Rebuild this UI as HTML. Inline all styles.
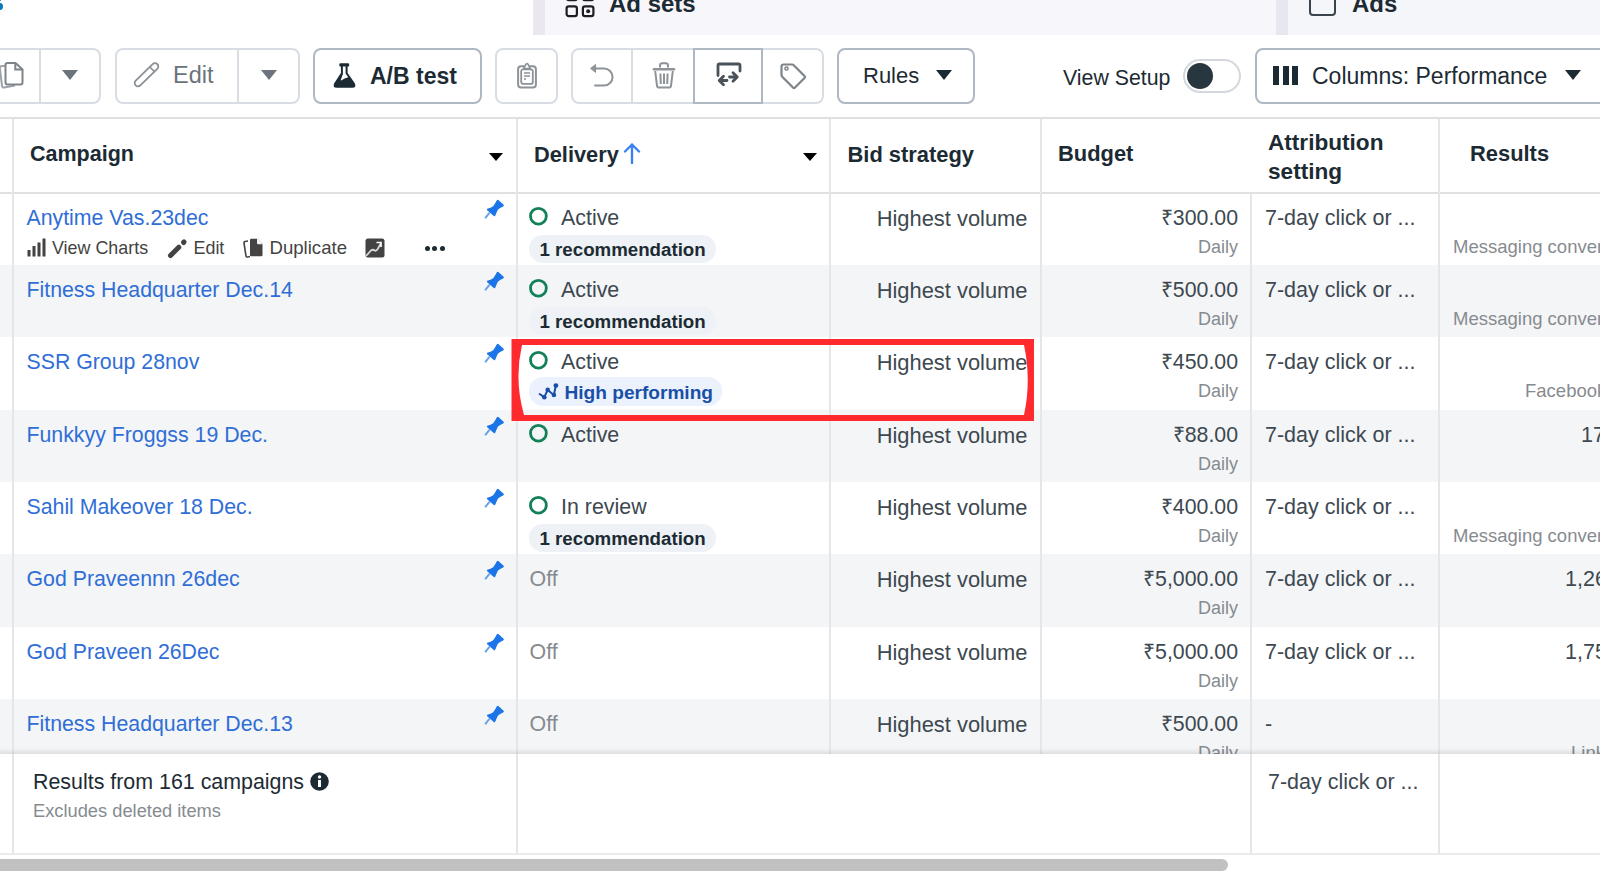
<!DOCTYPE html>
<html><head><meta charset="utf-8"><title>Ads Manager</title>
<style>
*{margin:0;padding:0;box-sizing:border-box}
html,body{width:1600px;height:872px;overflow:hidden;background:#fff;font-family:"Liberation Sans",sans-serif;position:relative}
.t{position:absolute;line-height:1;white-space:nowrap}
.a{position:absolute}
.btn{position:absolute;top:48px;height:56px;border:2px solid #d8dde3;border-radius:8px;background:#fff}
.dk{border-color:#aeb8c2}
.vl{position:absolute;width:2px;background:#e4e6ea}
.hl{position:absolute;height:2px;background:#dddddd}
.tri{position:absolute;width:0;height:0;border-left:8px solid transparent;border-right:8px solid transparent;border-top:9px solid #6b747c}
.row{position:absolute;left:0;width:1600px}
.alt{background:#f4f5f7}
.link{color:#2f6ed6}
.body{color:#3d4850}
.grey{color:#868b90}
.hd{color:#1c2b33;font-weight:bold}
.pill{position:absolute;border-radius:14px;background:#eef1f5}
</style></head><body>
<div class="a" style="left:533px;top:0;width:743px;height:35px;background:#f7f6fa"></div>
<div class="a" style="left:533px;top:0;width:12px;height:35px;background:#ebe7ee"></div>
<div class="a" style="left:1276px;top:0;width:12px;height:35px;background:#e7e8ef"></div>
<div class="a" style="left:1288px;top:0;width:312px;height:35px;background:#f5f6fa"></div>
<div class="a" style="left:-3.2px;top:3px;width:5.8px;height:6.8px;border-radius:50%;background:#0a78be"></div>
<div class="a" style="left:-2px;top:-1px;width:3.4px;height:2px;border-radius:1px;background:#0a78be"></div>
<svg class="a" style="left:564px;top:-14px" width="34" height="34" viewBox="0 0 34 34">
<rect x="2.6" y="4" width="10.3" height="10.2" rx="2.2" fill="none" stroke="#1c1e21" stroke-width="2.2"/>
<rect x="18.9" y="4" width="10.5" height="10.2" rx="2.2" fill="none" stroke="#1c1e21" stroke-width="2.2"/>
<rect x="2.6" y="20.3" width="10.3" height="9.9" rx="2.2" fill="none" stroke="#1c1e21" stroke-width="2.2"/>
<rect x="18.9" y="20.3" width="10.5" height="9.9" rx="2.2" fill="none" stroke="#1c1e21" stroke-width="2.2"/>
<circle cx="24.15" cy="25.25" r="2" fill="#1c1e21"/>
</svg>
<div class="t " style="top:-8.32px;font-size:24px;left:609.00px;color:#1c2b33;font-weight:bold;">Ad sets</div>
<div class="a" style="left:1309px;top:-12px;width:27px;height:28px;border:2.5px solid #3a444c;border-radius:4px"></div>
<div class="t " style="top:-8.32px;font-size:24px;left:1352.00px;color:#1c2b33;font-weight:bold;">Ads</div>
<div class="btn" style="left:-20px;width:121px"></div>
<div class="vl" style="left:39px;top:48px;height:56px;background:#d8dde3"></div>
<svg class="a" style="left:-6px;top:62px" width="32" height="28" viewBox="0 0 32 28">
<path d="M11 3.8 L7 4.3 Q5.6 4.5 5.8 5.9 L8 23.8 Q8.3 25.8 10.2 25.5 L21 23.6" fill="none" stroke="#9ca2a7" stroke-width="2"/>
<path d="M11.5 3 Q11.5 1 13.5 1 L21.5 1 L28.5 7.5 L28.5 20.5 Q28.5 22.5 26.5 22.5 L13.5 22.5 Q11.5 22.5 11.5 20.5 Z" fill="#fff" stroke="#7d848a" stroke-width="2" stroke-linejoin="round"/>
<path d="M21.3 1 L21.3 7.6 L28.5 7.6" fill="none" stroke="#7d848a" stroke-width="2"/>
</svg>
<div class="tri" style="left:62px;top:70px;border-left-width:8px;border-right-width:8px;border-top:10px solid #6b747c"></div>
<div class="btn" style="left:115px;width:185px"></div>
<div class="vl" style="left:237px;top:48px;height:56px;background:#d8dde3"></div>
<svg class="a" style="left:133px;top:62px" width="28" height="27" viewBox="0 0 28 27">
<path d="M2.69 18.64 L19.69 2.14 A3.3 3.3 0 0 1 24.31 6.86 L7.31 23.36 A3.3 3.3 0 0 1 2.69 18.64 Z" fill="none" stroke="#8a9095" stroke-width="1.8" stroke-linejoin="round"/>
<path d="M16.83 4.94 L21.45 9.66" stroke="#8a9095" stroke-width="1.6"/>
</svg>
<div class="t " style="top:64.11px;font-size:23.5px;left:173.00px;color:#6b737a;">Edit</div>
<div class="tri" style="left:261px;top:70px;border-top:10px solid #6b747c"></div>
<div class="btn dk" style="left:313px;width:169px"></div>
<svg class="a" style="left:332px;top:62px" width="26" height="27" viewBox="0 0 26 27">
<path d="M7.3 2.5 Q7.3 1.3 8.5 1.3 L16 1.3 Q17.2 1.3 17.2 2.5 L17.2 3.6 Q17.2 4.6 16.2 4.6 L15.6 4.6 L15.6 11 L22.8 21.2 Q24.8 25.8 20.3 25.8 L4.7 25.8 Q0.2 25.8 2.2 21.2 L8.9 11 L8.9 4.6 L8.3 4.6 Q7.3 4.6 7.3 3.6 Z" fill="#1c2b33"/>
<path d="M10.9 4.6 L13.6 4.6 L13.6 11.6 L16.3 15.2 Q12.5 16 9.2 18.6 Q8.6 18.3 8.9 17.4 L10.9 12 Z" fill="#fff"/>
</svg>
<div class="t " style="top:64.53px;font-size:23px;left:370.00px;color:#1c2b33;font-weight:bold;">A/B test</div>
<div class="btn" style="left:495px;width:63px"></div>
<svg class="a" style="left:515px;top:61px" width="24" height="29" viewBox="0 0 24 29">
<rect x="3.1" y="5.3" width="17.8" height="21.2" rx="3" fill="none" stroke="#8d9398" stroke-width="2"/>
<rect x="6.2" y="8.3" width="11.6" height="14.6" rx="2" fill="none" stroke="#8d9398" stroke-width="1.8"/>
<path d="M8.6 7.6 L11 3.2 Q12 2 13 3.2 L15.4 7.6 Z" fill="#fff" stroke="#8d9398" stroke-width="1.7" stroke-linejoin="round"/>
<path d="M9 12 L15 12 M9 15 L15 15 M9 18 L11 18" stroke="#8d9398" stroke-width="1.4"/>
</svg>
<div class="btn" style="left:571px;width:253px"></div>
<div class="vl" style="left:631px;top:48px;height:56px;background:#d8dde3"></div>
<div class="a" style="left:693px;top:48px;width:70px;height:56px;border:2px solid #aeb8c2"></div>
<svg class="a" style="left:589px;top:62px" width="26" height="26" viewBox="0 0 26 26">
<path d="M6 6.4 L15 6.4 A8.6 8.6 0 0 1 15 23.6 L6 23.6" fill="none" stroke="#8d9398" stroke-width="2" stroke-linecap="round"/>
<path d="M1.6 6.4 L6.6 2.4 L6.6 10.4 Z" fill="#8d9398" stroke="#8d9398" stroke-width="1" stroke-linejoin="round"/>
</svg>
<svg class="a" style="left:651px;top:62px" width="26" height="27" viewBox="0 0 26 27">
<path d="M9 5.5 L9 3.5 Q9 1.3 11.2 1.3 L14.8 1.3 Q17 1.3 17 3.5 L17 5.5" fill="none" stroke="#8d9398" stroke-width="2"/>
<path d="M3 6 L23 6 Q24.3 6 24.3 7.3 Q24.3 8.6 23 8.6 L3 8.6 Q1.7 8.6 1.7 7.3 Q1.7 6 3 6 Z" fill="#8d9398"/>
<path d="M4.2 9 L6 23.8 Q6.3 25.6 8.2 25.6 L17.8 25.6 Q19.7 25.6 20 23.8 L21.8 9" fill="none" stroke="#8d9398" stroke-width="2" stroke-linejoin="round"/>
<path d="M9.4 11.5 L9.8 22 M13 11.5 L13 22 M16.6 11.5 L16.2 22" stroke="#8d9398" stroke-width="2"/>
</svg>
<svg class="a" style="left:714px;top:62px" width="30" height="26" viewBox="0 0 30 26">
<path d="M4 13.5 L4 3.5 Q4 2 5.5 2 L24.5 2 Q26 2 26 3.5 L26 9" fill="none" stroke="#4a5258" stroke-width="2.8" stroke-linecap="round" stroke-linejoin="round"/>
<path d="M13 18.5 L5.5 18.5 M9.5 14.2 L5.2 18.5 L9.5 22.8" fill="none" stroke="#4a5258" stroke-width="2.8" stroke-linecap="round" stroke-linejoin="round"/>
<path d="M15.5 15 L23 15 M19 10.7 L23.3 15 L19 19.3" fill="none" stroke="#4a5258" stroke-width="2.8" stroke-linecap="round" stroke-linejoin="round"/>
</svg>
<svg class="a" style="left:779px;top:62px" width="28" height="28" viewBox="0 0 28 28">
<path d="M2.5 4.5 Q2.5 2.5 4.5 2.5 L13 2.5 Q14 2.5 15 3.5 L25.5 14 Q26.5 15 25.5 16 L16 25.5 Q15 26.5 14 25.5 L3.5 15 Q2.5 14 2.5 13 Z" fill="none" stroke="#7d848a" stroke-width="2.2" stroke-linejoin="round"/>
<circle cx="7.5" cy="6.5" r="1.6" fill="none" stroke="#7d848a" stroke-width="1.5"/>
</svg>
<div class="btn dk" style="left:837px;width:138px"></div>
<div class="t " style="top:65.38px;font-size:22px;left:863.00px;color:#1c2b33;">Rules</div>
<div class="tri" style="left:936px;top:70px;border-top:10px solid #1c2b33"></div>
<div class="t " style="top:67.57px;font-size:21.3px;left:1063.00px;color:#1c2b33;">View Setup</div>
<div class="a" style="left:1183px;top:59px;width:58px;height:34px;border:2px solid #d5d9de;border-radius:17px;background:#fff"></div>
<div class="a" style="left:1187px;top:63px;width:26px;height:26px;border-radius:50%;background:#283640"></div>
<div class="btn dk" style="left:1255px;width:380px"></div>
<div class="a" style="left:1273px;top:66px;width:6px;height:19px;background:#1c2b33"></div>
<div class="a" style="left:1282.5px;top:66px;width:6px;height:19px;background:#1c2b33"></div>
<div class="a" style="left:1292px;top:66px;width:6px;height:19px;background:#1c2b33"></div>
<div class="t " style="top:64.53px;font-size:23px;left:1312.00px;color:#1c2b33;">Columns: Performance</div>
<div class="tri" style="left:1565px;top:70px;border-top:10px solid #1c2b33"></div>
<div class="row alt" style="top:265px;height:72px"></div>
<div class="row alt" style="top:410px;height:72px"></div>
<div class="row alt" style="top:554px;height:73px"></div>
<div class="row alt" style="top:699px;height:72px"></div>
<div class="hl" style="left:0;top:117px;width:1600px;background:#e0e0e0"></div>
<div class="hl" style="left:0;top:192px;width:1600px;background:#e1e1e1"></div>
<div class="vl" style="left:12px;top:119px;height:635px"></div>
<div class="vl" style="left:516px;top:119px;height:635px"></div>
<div class="vl" style="left:829px;top:119px;height:635px"></div>
<div class="vl" style="left:1040px;top:119px;height:635px"></div>
<div class="vl" style="left:1438px;top:119px;height:635px"></div>
<div class="vl" style="left:1250px;top:194px;height:560px"></div>
<div class="t hd" style="top:143.80px;font-size:21.5px;left:30.00px;">Campaign</div>
<div class="tri" style="left:489px;top:153px;border-left-width:7px;border-right-width:7px;border-top:8px solid #000"></div>
<div class="t hd" style="top:143.55px;font-size:21.8px;left:534.00px;">Delivery</div>
<svg class="a" style="left:623px;top:142px" width="18" height="22" viewBox="0 0 18 22">
<path d="M9 21 L9 2.5 M2 9.5 L9 2.5 L16 9.5" fill="none" stroke="#3b82f0" stroke-width="2.4" stroke-linecap="round" stroke-linejoin="round"/>
</svg>
<div class="tri" style="left:803px;top:153px;border-left-width:7px;border-right-width:7px;border-top:8px solid #000"></div>
<div class="t hd" style="top:143.96px;font-size:21.9px;left:847.50px;">Bid strategy</div>
<div class="t hd" style="top:143.46px;font-size:21.9px;left:1058.00px;">Budget</div>
<div class="t hd" style="top:132.17px;font-size:22.6px;left:1268.00px;">Attribution</div>
<div class="t hd" style="top:161.47px;font-size:22.6px;left:1268.00px;">setting</div>
<div class="t hd" style="top:143.46px;font-size:21.9px;left:1470.00px;">Results</div>
<div class="t link" style="top:208.17px;font-size:21.3px;left:26.50px;">Anytime Vas.23dec</div>
<svg class="a" style="left:475px;top:195px" width="40" height="30" viewBox="0 0 40 30">
<path d="M14.2 18.2 L10.6 22.6" stroke="#6aa0f0" stroke-width="2" stroke-linecap="round"/>
<path d="M21.9 5.2 Q22.6 4.4 23.4 5 L28.6 9.8 Q29.3 10.6 28.5 11.3 Q25.5 12.5 23 14.6 Q21.6 17.4 20.2 20.8 Q19.6 21.7 18.8 21.1 L12.2 15.2 Q11.5 14.4 12.3 13.8 Q15.6 12.8 18.2 11.2 Q20.2 8.6 21.9 5.2 Z" fill="#1b74e8"/>
</svg>
<svg class="a" style="left:528px;top:205px" width="22" height="22" viewBox="0 0 22 22"><circle cx="10.4" cy="11.2" r="7.9" fill="none" stroke="#138058" stroke-width="2.8"/></svg>
<div class="t body" style="top:208.08px;font-size:21.4px;left:561.00px;">Active</div>
<div class="pill" style="left:529px;top:235px;width:187px;height:28px"></div>
<div class="t " style="top:241.17px;font-size:18.7px;left:539.50px;color:#1c2b33;font-weight:bold;">1 recommendation</div>
<div class="t body" style="top:207.66px;font-size:21.9px;right:572.50px;text-align:right;">Highest volume</div>
<div class="t body" style="top:208.17px;font-size:21.3px;right:362.00px;text-align:right;">₹300.00</div>
<div class="t grey" style="top:237.96px;font-size:18px;right:362.00px;text-align:right;">Daily</div>
<div class="t body" style="top:208.00px;font-size:21.5px;left:1265.00px;">7-day click or ...</div>
<div class="t grey" style="top:237.54px;font-size:18.5px;left:1453.00px;">Messaging conversations started</div>
<div class="t link" style="top:280.17px;font-size:21.3px;left:26.50px;">Fitness Headquarter Dec.14</div>
<svg class="a" style="left:475px;top:267px" width="40" height="30" viewBox="0 0 40 30">
<path d="M14.2 18.2 L10.6 22.6" stroke="#6aa0f0" stroke-width="2" stroke-linecap="round"/>
<path d="M21.9 5.2 Q22.6 4.4 23.4 5 L28.6 9.8 Q29.3 10.6 28.5 11.3 Q25.5 12.5 23 14.6 Q21.6 17.4 20.2 20.8 Q19.6 21.7 18.8 21.1 L12.2 15.2 Q11.5 14.4 12.3 13.8 Q15.6 12.8 18.2 11.2 Q20.2 8.6 21.9 5.2 Z" fill="#1b74e8"/>
</svg>
<svg class="a" style="left:528px;top:277px" width="22" height="22" viewBox="0 0 22 22"><circle cx="10.4" cy="11.2" r="7.9" fill="none" stroke="#138058" stroke-width="2.8"/></svg>
<div class="t body" style="top:280.08px;font-size:21.4px;left:561.00px;">Active</div>
<div class="pill" style="left:529px;top:307px;width:187px;height:28px"></div>
<div class="t " style="top:313.17px;font-size:18.7px;left:539.50px;color:#1c2b33;font-weight:bold;">1 recommendation</div>
<div class="t body" style="top:279.66px;font-size:21.9px;right:572.50px;text-align:right;">Highest volume</div>
<div class="t body" style="top:280.17px;font-size:21.3px;right:362.00px;text-align:right;">₹500.00</div>
<div class="t grey" style="top:309.96px;font-size:18px;right:362.00px;text-align:right;">Daily</div>
<div class="t body" style="top:280.00px;font-size:21.5px;left:1265.00px;">7-day click or ...</div>
<div class="t grey" style="top:309.54px;font-size:18.5px;left:1453.00px;">Messaging conversations started</div>
<div class="t link" style="top:352.17px;font-size:21.3px;left:26.50px;">SSR Group 28nov</div>
<svg class="a" style="left:475px;top:339px" width="40" height="30" viewBox="0 0 40 30">
<path d="M14.2 18.2 L10.6 22.6" stroke="#6aa0f0" stroke-width="2" stroke-linecap="round"/>
<path d="M21.9 5.2 Q22.6 4.4 23.4 5 L28.6 9.8 Q29.3 10.6 28.5 11.3 Q25.5 12.5 23 14.6 Q21.6 17.4 20.2 20.8 Q19.6 21.7 18.8 21.1 L12.2 15.2 Q11.5 14.4 12.3 13.8 Q15.6 12.8 18.2 11.2 Q20.2 8.6 21.9 5.2 Z" fill="#1b74e8"/>
</svg>
<svg class="a" style="left:528px;top:349px" width="22" height="22" viewBox="0 0 22 22"><circle cx="10.4" cy="11.2" r="7.9" fill="none" stroke="#138058" stroke-width="2.8"/></svg>
<div class="t body" style="top:352.08px;font-size:21.4px;left:561.00px;">Active</div>
<div class="pill" style="left:529px;top:377px;width:193px;height:29px;background:#ebf2fd"></div>
<svg class="a" style="left:538px;top:383px" width="22" height="20" viewBox="0 0 22 20">
<path d="M1.6 11 L6.3 14.2 L9.7 6.9 L15.9 12 L17.9 2.1" fill="none" stroke="#1a4fa8" stroke-width="2" stroke-linejoin="round" stroke-linecap="round"/>
<circle cx="6.3" cy="14.2" r="2.3" fill="#1a4fa8"/><circle cx="9.7" cy="6.9" r="2.3" fill="#1a4fa8"/><circle cx="15.9" cy="12" r="2.3" fill="#1a4fa8"/><circle cx="17.9" cy="2.6" r="2.4" fill="#1a4fa8"/>
</svg>
<div class="t " style="top:383.23px;font-size:19.1px;left:564.50px;color:#1a4fa8;font-weight:bold;">High performing</div>
<div class="t body" style="top:351.66px;font-size:21.9px;right:572.50px;text-align:right;">Highest volume</div>
<div class="t body" style="top:352.17px;font-size:21.3px;right:362.00px;text-align:right;">₹450.00</div>
<div class="t grey" style="top:381.96px;font-size:18px;right:362.00px;text-align:right;">Daily</div>
<div class="t body" style="top:352.00px;font-size:21.5px;left:1265.00px;">7-day click or ...</div>
<div class="t grey" style="top:381.54px;font-size:18.5px;left:1525.00px;">Facebook likes</div>
<div class="t link" style="top:425.17px;font-size:21.3px;left:26.50px;">Funkkyy Froggss 19 Dec.</div>
<svg class="a" style="left:475px;top:412px" width="40" height="30" viewBox="0 0 40 30">
<path d="M14.2 18.2 L10.6 22.6" stroke="#6aa0f0" stroke-width="2" stroke-linecap="round"/>
<path d="M21.9 5.2 Q22.6 4.4 23.4 5 L28.6 9.8 Q29.3 10.6 28.5 11.3 Q25.5 12.5 23 14.6 Q21.6 17.4 20.2 20.8 Q19.6 21.7 18.8 21.1 L12.2 15.2 Q11.5 14.4 12.3 13.8 Q15.6 12.8 18.2 11.2 Q20.2 8.6 21.9 5.2 Z" fill="#1b74e8"/>
</svg>
<svg class="a" style="left:528px;top:422px" width="22" height="22" viewBox="0 0 22 22"><circle cx="10.4" cy="11.2" r="7.9" fill="none" stroke="#138058" stroke-width="2.8"/></svg>
<div class="t body" style="top:425.08px;font-size:21.4px;left:561.00px;">Active</div>
<div class="t body" style="top:424.66px;font-size:21.9px;right:572.50px;text-align:right;">Highest volume</div>
<div class="t body" style="top:425.17px;font-size:21.3px;right:362.00px;text-align:right;">₹88.00</div>
<div class="t grey" style="top:454.96px;font-size:18px;right:362.00px;text-align:right;">Daily</div>
<div class="t body" style="top:425.00px;font-size:21.5px;left:1265.00px;">7-day click or ...</div>
<div class="t body" style="top:425.00px;font-size:21.5px;left:1581.00px;">170</div>
<div class="t link" style="top:497.17px;font-size:21.3px;left:26.50px;">Sahil Makeover 18 Dec.</div>
<svg class="a" style="left:475px;top:484px" width="40" height="30" viewBox="0 0 40 30">
<path d="M14.2 18.2 L10.6 22.6" stroke="#6aa0f0" stroke-width="2" stroke-linecap="round"/>
<path d="M21.9 5.2 Q22.6 4.4 23.4 5 L28.6 9.8 Q29.3 10.6 28.5 11.3 Q25.5 12.5 23 14.6 Q21.6 17.4 20.2 20.8 Q19.6 21.7 18.8 21.1 L12.2 15.2 Q11.5 14.4 12.3 13.8 Q15.6 12.8 18.2 11.2 Q20.2 8.6 21.9 5.2 Z" fill="#1b74e8"/>
</svg>
<svg class="a" style="left:528px;top:494px" width="22" height="22" viewBox="0 0 22 22"><circle cx="10.4" cy="11.2" r="7.9" fill="none" stroke="#138058" stroke-width="2.8"/></svg>
<div class="t body" style="top:497.08px;font-size:21.4px;left:561.00px;">In review</div>
<div class="pill" style="left:529px;top:524px;width:187px;height:28px"></div>
<div class="t " style="top:530.17px;font-size:18.7px;left:539.50px;color:#1c2b33;font-weight:bold;">1 recommendation</div>
<div class="t body" style="top:496.66px;font-size:21.9px;right:572.50px;text-align:right;">Highest volume</div>
<div class="t body" style="top:497.17px;font-size:21.3px;right:362.00px;text-align:right;">₹400.00</div>
<div class="t grey" style="top:526.96px;font-size:18px;right:362.00px;text-align:right;">Daily</div>
<div class="t body" style="top:497.00px;font-size:21.5px;left:1265.00px;">7-day click or ...</div>
<div class="t grey" style="top:526.54px;font-size:18.5px;left:1453.00px;">Messaging conversations started</div>
<div class="t link" style="top:569.17px;font-size:21.3px;left:26.50px;">God Praveennn 26dec</div>
<svg class="a" style="left:475px;top:556px" width="40" height="30" viewBox="0 0 40 30">
<path d="M14.2 18.2 L10.6 22.6" stroke="#6aa0f0" stroke-width="2" stroke-linecap="round"/>
<path d="M21.9 5.2 Q22.6 4.4 23.4 5 L28.6 9.8 Q29.3 10.6 28.5 11.3 Q25.5 12.5 23 14.6 Q21.6 17.4 20.2 20.8 Q19.6 21.7 18.8 21.1 L12.2 15.2 Q11.5 14.4 12.3 13.8 Q15.6 12.8 18.2 11.2 Q20.2 8.6 21.9 5.2 Z" fill="#1b74e8"/>
</svg>
<div class="t grey" style="top:569.08px;font-size:21.4px;left:529.50px;">Off</div>
<div class="t body" style="top:568.66px;font-size:21.9px;right:572.50px;text-align:right;">Highest volume</div>
<div class="t body" style="top:569.17px;font-size:21.3px;right:362.00px;text-align:right;">₹5,000.00</div>
<div class="t grey" style="top:598.96px;font-size:18px;right:362.00px;text-align:right;">Daily</div>
<div class="t body" style="top:569.00px;font-size:21.5px;left:1265.00px;">7-day click or ...</div>
<div class="t body" style="top:569.00px;font-size:21.5px;left:1565.00px;">1,260</div>
<div class="t link" style="top:642.17px;font-size:21.3px;left:26.50px;">God Praveen 26Dec</div>
<svg class="a" style="left:475px;top:629px" width="40" height="30" viewBox="0 0 40 30">
<path d="M14.2 18.2 L10.6 22.6" stroke="#6aa0f0" stroke-width="2" stroke-linecap="round"/>
<path d="M21.9 5.2 Q22.6 4.4 23.4 5 L28.6 9.8 Q29.3 10.6 28.5 11.3 Q25.5 12.5 23 14.6 Q21.6 17.4 20.2 20.8 Q19.6 21.7 18.8 21.1 L12.2 15.2 Q11.5 14.4 12.3 13.8 Q15.6 12.8 18.2 11.2 Q20.2 8.6 21.9 5.2 Z" fill="#1b74e8"/>
</svg>
<div class="t grey" style="top:642.08px;font-size:21.4px;left:529.50px;">Off</div>
<div class="t body" style="top:641.66px;font-size:21.9px;right:572.50px;text-align:right;">Highest volume</div>
<div class="t body" style="top:642.17px;font-size:21.3px;right:362.00px;text-align:right;">₹5,000.00</div>
<div class="t grey" style="top:671.96px;font-size:18px;right:362.00px;text-align:right;">Daily</div>
<div class="t body" style="top:642.00px;font-size:21.5px;left:1265.00px;">7-day click or ...</div>
<div class="t body" style="top:642.00px;font-size:21.5px;left:1565.00px;">1,750</div>
<div class="t link" style="top:714.17px;font-size:21.3px;left:26.50px;">Fitness Headquarter Dec.13</div>
<svg class="a" style="left:475px;top:701px" width="40" height="30" viewBox="0 0 40 30">
<path d="M14.2 18.2 L10.6 22.6" stroke="#6aa0f0" stroke-width="2" stroke-linecap="round"/>
<path d="M21.9 5.2 Q22.6 4.4 23.4 5 L28.6 9.8 Q29.3 10.6 28.5 11.3 Q25.5 12.5 23 14.6 Q21.6 17.4 20.2 20.8 Q19.6 21.7 18.8 21.1 L12.2 15.2 Q11.5 14.4 12.3 13.8 Q15.6 12.8 18.2 11.2 Q20.2 8.6 21.9 5.2 Z" fill="#1b74e8"/>
</svg>
<div class="t grey" style="top:714.08px;font-size:21.4px;left:529.50px;">Off</div>
<div class="t body" style="top:713.66px;font-size:21.9px;right:572.50px;text-align:right;">Highest volume</div>
<div class="t body" style="top:714.17px;font-size:21.3px;right:362.00px;text-align:right;">₹500.00</div>
<div class="t grey" style="top:743.96px;font-size:18px;right:362.00px;text-align:right;">Daily</div>
<div class="t body" style="top:714.00px;font-size:21.5px;left:1265.00px;">-</div>
<div class="t grey" style="top:743.54px;font-size:18.5px;left:1571.00px;">Link clicks</div>
<svg class="a" style="left:27px;top:238px" width="19" height="19" viewBox="0 0 19 19">
<rect x="0.5" y="12" width="3" height="6.5" fill="#434343"/><rect x="5.5" y="8" width="3" height="10.5" fill="#434343"/>
<rect x="10.5" y="4.5" width="3" height="14" fill="#434343"/><rect x="15.5" y="0.5" width="3" height="18" fill="#434343"/>
</svg>
<div class="t " style="top:239.55px;font-size:17.9px;left:52.00px;color:#434343;">View Charts</div>
<svg class="a" style="left:166px;top:236px" width="24" height="24" viewBox="0 0 24 24">
<path d="M4.5 19.5 L12.8 11.2" stroke="#434343" stroke-width="5" stroke-linecap="round"/>
<path d="M17.6 6.4 L18 6" stroke="#434343" stroke-width="5.2" stroke-linecap="round"/>
</svg>
<div class="t " style="top:239.55px;font-size:17.9px;left:193.50px;color:#434343;">Edit</div>
<svg class="a" style="left:243px;top:238px" width="21" height="20" viewBox="0 0 21 20">
<path d="M5 3 L2 3.5 Q0.8 3.8 1 5 L3 18 Q3.2 19.3 4.5 19 L7 18.5" fill="none" stroke="#434343" stroke-width="1.6"/>
<path d="M7 2 Q7 0.8 8.2 0.8 L14.5 0.8 L19.5 5.8 L19.5 17 Q19.5 18.2 18.3 18.2 L8.2 18.2 Q7 18.2 7 17 Z" fill="#434343"/>
<path d="M14.5 0.8 L14.5 5.8 L19.5 5.8" fill="#fff" stroke="#fff" stroke-width="0.8"/>
</svg>
<div class="t " style="top:238.96px;font-size:18.6px;left:269.50px;color:#434343;">Duplicate</div>
<svg class="a" style="left:365px;top:238px" width="20" height="20" viewBox="0 0 20 20">
<rect x="0.5" y="0.5" width="19" height="19" rx="2.5" fill="#434343"/>
<path d="M1 18 L6 12.5 Q8 11 9.5 12.5 Q11 13.5 13 10.5 L15.5 6" fill="none" stroke="#d8d8d8" stroke-width="1.8"/>
<path d="M11.5 4.5 L16 4.5 L16 9" fill="none" stroke="#fff" stroke-width="1.7"/>
</svg>
<div class="a" style="left:424.5px;top:246px;width:5px;height:5px;border-radius:50%;background:#1c2b33"></div>
<div class="a" style="left:432.2px;top:246px;width:5px;height:5px;border-radius:50%;background:#1c2b33"></div>
<div class="a" style="left:440.0px;top:246px;width:5px;height:5px;border-radius:50%;background:#1c2b33"></div>
<div class="a" style="left:0;top:748px;width:1600px;height:6px;background:linear-gradient(to bottom, rgba(0,0,0,0), rgba(0,0,0,0.09))"></div>
<div class="a" style="left:0;top:754px;width:1600px;height:100px;background:#fff"></div>
<div class="vl" style="left:12px;top:754px;height:100px"></div>
<div class="vl" style="left:516px;top:754px;height:100px"></div>
<div class="vl" style="left:1250px;top:754px;height:100px"></div>
<div class="vl" style="left:1438px;top:754px;height:100px"></div>
<div class="hl" style="left:0;top:853px;width:1600px;background:#ebebeb"></div>
<div class="t " style="top:772.18px;font-size:21.4px;left:33.00px;color:#1c2b33;">Results from 161 campaigns</div>
<svg class="a" style="left:310px;top:772px" width="19" height="19" viewBox="0 0 19 19">
<circle cx="9.5" cy="9.5" r="9.3" fill="#1c2b33"/><rect x="8" y="8" width="3" height="7" fill="#fff"/><circle cx="9.5" cy="5" r="1.7" fill="#fff"/>
</svg>
<div class="t grey" style="top:802.11px;font-size:18.3px;left:33.00px;">Excludes deleted items</div>
<div class="t body" style="top:771.80px;font-size:21.5px;left:1268.00px;">7-day click or ...</div>
<div class="a" style="left:-10px;top:859px;width:1238px;height:12px;border-radius:6px;background:#c1c1c1"></div>
<svg class="a" style="left:0;top:0;pointer-events:none" width="1600" height="872" viewBox="0 0 1600 872">
<path fill="#ff2a2e" fill-rule="evenodd" d="M511.5 339 L1034 339 L1034 421 L511.5 421 Z M522 345 L1024 345 Q1031.5 380 1024 415 L524 415 Q514 380 522 345 Z"/>
</svg>
</body></html>
